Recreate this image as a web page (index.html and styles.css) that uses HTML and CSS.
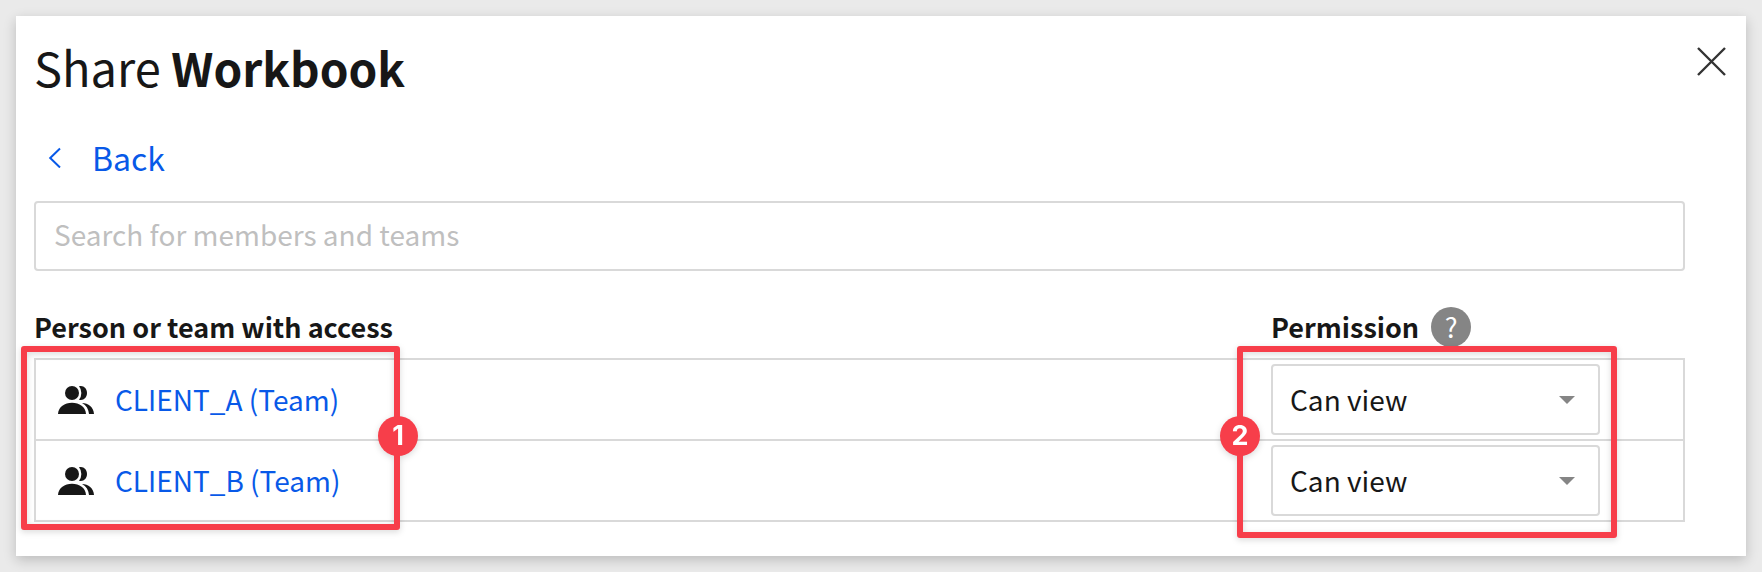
FILE: index.html
```html
<!DOCTYPE html>
<html lang="en">
<head>
<meta charset="utf-8">
<title>Share Workbook</title>
<link rel="stylesheet" href="styles.css">
</head>
<body>
<svg class="defs" aria-hidden="true">
  <symbol id="people" viewBox="54 48 108 84">
    <circle cx="96" cy="69" r="21"/>
    <path d="M54 132C55 110 74 98 96 98S137 110 138 132Z"/>
    <path d="M117 49C130 45 141 55 141 69S130 93 117 89Q124 81 124 69T117 49Z"/>
    <path d="M126 99C145 99 161 112 162 132H147C146 118 139 106 126 99Z"/>
  </symbol>
  <symbol id="caret" viewBox="0 0 16 8"><path d="M0 0H16L8 8Z"/></symbol>
</svg>
<main class="dialog" role="dialog" aria-labelledby="dialog-title">
  <header class="dialog-header">
    <h1 class="title" id="dialog-title">Share <strong>Workbook</strong></h1>
    <button class="close" type="button" aria-label="Close">
      <svg class="close-icon" viewBox="0 0 34 34"><path d="M4 4L31 31M31 4L4 31"/></svg>
    </button>
  </header>
  <div class="content">
    <a class="back" href="#">
      <svg class="back-icon" viewBox="0 0 14 22"><path d="M12 2.500L2.200 12L12 21.500"/></svg>
      Back
    </a>
    <input class="search" type="text" placeholder="Search for members and teams" aria-label="Search for members and teams">
    <div class="access">
      <table class="access-table">
        <thead>
          <tr>
            <th class="member-head" scope="col">Person or team with access</th>
            <th class="permission-head" scope="col">
              <div class="permission-label">Permission
                <button class="help" type="button" aria-label="About permissions">?</button>
              </div>
            </th>
          </tr>
        </thead>
        <tbody>
          <tr>
            <td class="member-cell">
              <div class="member">
                <svg class="people-icon"><use href="#people"/></svg>
                <a class="member-link" href="#">CLIENT_A (Team)</a>
              </div>
            </td>
            <td class="permission-cell">
              <div class="select-box">
                <select class="select" aria-label="Permission for CLIENT_A"><option>Can view</option><option>Can edit</option></select>
                <svg class="caret"><use href="#caret"/></svg>
              </div>
            </td>
          </tr>
          <tr>
            <td class="member-cell">
              <div class="member">
                <svg class="people-icon"><use href="#people"/></svg>
                <a class="member-link" href="#">CLIENT_B (Team)</a>
              </div>
            </td>
            <td class="permission-cell">
              <div class="select-box">
                <select class="select" aria-label="Permission for CLIENT_B"><option>Can view</option><option>Can edit</option></select>
                <svg class="caret"><use href="#caret"/></svg>
              </div>
            </td>
          </tr>
        </tbody>
      </table>
      <div class="callout callout-members"><span class="badge">1</span></div>
      <div class="callout callout-permissions"><span class="badge">2</span></div>
    </div>
  </div>
</main>
</body>
</html>
```

FILE: styles.css
```css
* {
  box-sizing: border-box;
}

body {
  margin: 0;
  padding: 16px;
  background: #eaeaea;
  color: #171717;
  font-family: "Noto Sans CJK SC", "Noto Sans", sans-serif;
  font-size: 28px;
  line-height: 40px;
}

.defs {
  display: none;
}

.dialog {
  padding: 15px 18px 34px;
  background: #fff;
  box-shadow: 0 4px 12px rgba(0, 0, 0, 0.2);
}

.dialog-header {
  display: flex;
  justify-content: space-between;
  align-items: flex-start;
}

.title {
  margin: 0;
  font-size: 47px;
  font-weight: 400;
  line-height: 72px;
}

.title strong {
  font-size: 46px;
  font-weight: 700;
}

.close {
  margin: 13px 0 0;
  padding: 0;
  border: 0;
  background: none;
}

.close-icon {
  display: block;
  width: 34px;
  height: 34px;
  fill: none;
  stroke: #333;
  stroke-width: 2.4;
}

.content {
  display: flex;
  flex-direction: column;
  align-items: stretch;
  margin-right: 43px;
}

.back {
  display: flex;
  align-self: flex-start;
  align-items: center;
  gap: 30px;
  margin-top: 31px;
  padding-left: 14px;
  color: #0859e8;
  font-size: 32px;
  line-height: 46px;
  text-decoration: none;
}

.back-icon {
  width: 14px;
  height: 22px;
  fill: none;
  stroke: currentColor;
  stroke-width: 2;
}

.search {
  width: 100%;
  height: 70px;
  margin-top: 21px;
  padding: 0 18px 4px;
  border: 2px solid #d9d9d9;
  border-radius: 4px;
  background: #fff;
  color: inherit;
  font: inherit;
}

.search::placeholder {
  color: #bfbfbf;
}

.access {
  position: relative;
  margin-top: 36px;
}

.access-table {
  width: 100%;
  border-collapse: separate;
  border-spacing: 0;
}

th,
td {
  padding: 0;
  border: 0 solid #d9d9d9;
  border-bottom-width: 2px;
  text-align: left;
}

th {
  padding-bottom: 11px;
  font-size: 27px;
  font-weight: 700;
}

.permission-head {
  width: 414px;
}

.permission-label {
  display: flex;
  align-items: center;
  gap: 12px;
}

.help {
  width: 40px;
  height: 40px;
  padding: 0;
  border: 0;
  border-radius: 50%;
  background: #858585;
  color: #fff;
  font: inherit;
  font-weight: 400;
  line-height: 38px;
}

.member-cell {
  padding-left: 22px;
  border-left-width: 2px;
}

.member {
  display: flex;
  align-items: center;
  gap: 21px;
}

.people-icon {
  width: 36px;
  height: 28px;
  fill: #171717;
}

.member-link {
  padding-bottom: 2px;
  color: #0859e8;
  text-decoration: none;
}

.permission-cell {
  padding: 4px 83px 4px 0;
  border-right-width: 2px;
}

.select-box {
  display: grid;
  align-items: center;
}

.select {
  grid-area: 1 / 1;
  width: 100%;
  height: 71px;
  padding: 0 48px 2px 17px;
  border: 2px solid #d9d9d9;
  border-radius: 4px;
  background: #fff;
  color: inherit;
  font: inherit;
  appearance: none;
}

.caret {
  grid-area: 1 / 1;
  justify-self: end;
  width: 16px;
  height: 8px;
  margin-right: 25px;
  fill: #858585;
  pointer-events: none;
}

.callout {
  position: absolute;
  top: 39px;
  border: 6px solid #f73e4a;
  border-radius: 3px;
  filter: drop-shadow(0 2px 3px rgba(0, 0, 0, 0.15));
  pointer-events: none;
}

.callout-members {
  bottom: -8px;
  left: -13px;
  width: 379px;
}

.callout-permissions {
  right: 68px;
  bottom: -16px;
  width: 380px;
}

.badge {
  position: absolute;
  top: 64px;
  width: 40px;
  height: 40px;
  border-radius: 50%;
  background: #f73e4a;
  color: #fff;
  font-family: Inter, sans-serif;
  font-size: 27px;
  font-weight: 700;
  line-height: 39px;
  text-align: center;
}

.callout-members .badge {
  right: -24px;
}

.callout-permissions .badge {
  left: -23px;
}
```
